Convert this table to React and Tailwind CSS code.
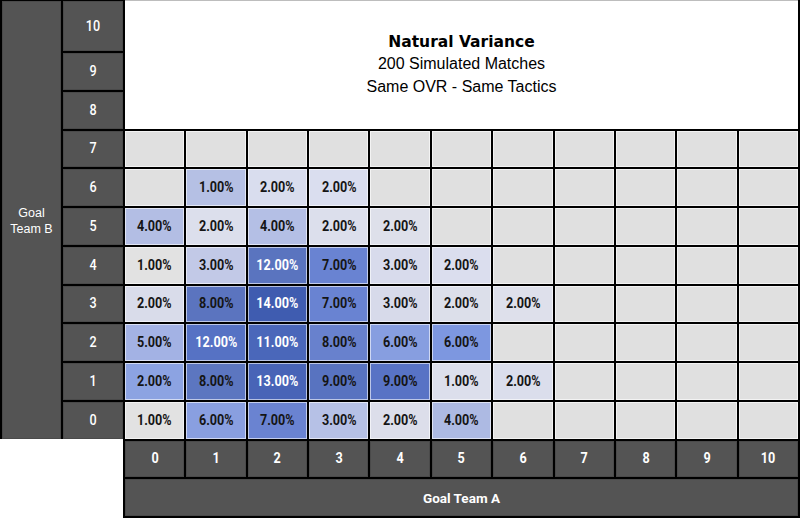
import React from "react";

const CELLS = {
  "6-1": ["1.00%", "#b5c0e4"],
  "6-2": ["2.00%", "#d9ddee"],
  "6-3": ["2.00%", "#dadeef"],
  "5-0": ["4.00%", "#b3bee4"],
  "5-1": ["2.00%", "#dcdfec"],
  "5-2": ["4.00%", "#b4bfe5"],
  "5-3": ["2.00%", "#dcdfec"],
  "5-4": ["2.00%", "#dee0ea"],
  "4-0": ["1.00%", "#e2e2e2"],
  "4-1": ["3.00%", "#c2c9e7"],
  "4-2": ["12.00%", "#5a74bf", true],
  "4-3": ["7.00%", "#6983d2"],
  "4-4": ["3.00%", "#d8dbec"],
  "4-5": ["2.00%", "#dbdeee"],
  "3-0": ["2.00%", "#d9dcea"],
  "3-1": ["8.00%", "#5b74bf"],
  "3-2": ["14.00%", "#3f5cb0", true],
  "3-3": ["7.00%", "#6983d2"],
  "3-4": ["3.00%", "#d7daea"],
  "3-5": ["2.00%", "#dcdfea"],
  "3-6": ["2.00%", "#dee0eb"],
  "2-0": ["5.00%", "#a3b2e4"],
  "2-1": ["12.00%", "#5672c4", true],
  "2-2": ["11.00%", "#4a67ba", true],
  "2-3": ["8.00%", "#6881cd"],
  "2-4": ["6.00%", "#879ee0"],
  "2-5": ["6.00%", "#7d97e0"],
  "1-0": ["2.00%", "#8ca3e2"],
  "1-1": ["8.00%", "#5c76c0"],
  "1-2": ["13.00%", "#4864b7", true],
  "1-3": ["9.00%", "#5873c0"],
  "1-4": ["9.00%", "#5873c5"],
  "1-5": ["1.00%", "#dcdfec"],
  "1-6": ["2.00%", "#dbdeec"],
  "0-0": ["1.00%", "#e2e2e2"],
  "0-1": ["6.00%", "#899fe0"],
  "0-2": ["7.00%", "#6a83d1"],
  "0-3": ["3.00%", "#b6c1e6"],
  "0-4": ["2.00%", "#dcdeea"],
  "0-5": ["4.00%", "#adbae3"],
};

const COND = { fontFamily: "Roboto, sans-serif" };

const cols = [0, 1, 2, 3, 4, 5, 6, 7, 8, 9, 10];
const dataRows = [7, 6, 5, 4, 3, 2, 1, 0];

function Label({ children, bold = false }) {
  return (
    <div
      className={`bg-[#545454] text-white flex items-center justify-center border border-[#4a4a4a] ${
        bold ? "font-bold" : "font-medium"
      }`}
      style={COND}
    >
      <span className="inline-block text-[14px] scale-x-[0.9]">{children}</span>
    </div>
  );
}

export default function App() {
  return (
    <div
      className="w-[800px] h-[518px] bg-black grid gap-[2px] pt-[1px] pb-[2px] px-[2px] grid-cols-[59px_60px_repeat(11,minmax(0,1fr))] grid-rows-[50px_repeat(12,minmax(0,1fr))]"
      style={{ fontFamily: '"Liberation Sans", Arial, sans-serif' }}
    >
      <div className="row-span-11 bg-[#545454] border border-[#4a4a4a] flex items-center justify-center text-white text-[12.5px] leading-[16px] text-center pt-[3px]">
        Goal
        <br />
        Team B
      </div>
      <Label>10</Label>
      <div className="col-span-11 row-span-3 bg-white -mt-[1px] border-t border-[#bdbdbd] flex flex-col items-center justify-center text-black">
        <div
          className="text-[15.5px] font-bold leading-[20px]"
          style={{ fontFamily: '"DejaVu Sans", sans-serif' }}
        >
          Natural Variance
        </div>
        <div className="text-[16px] leading-[23px]">200 Simulated Matches</div>
        <div className="text-[16px] leading-[23px]">Same OVR - Same Tactics</div>
      </div>
      <Label>9</Label>
      <Label>8</Label>
      {dataRows.map((r) => (
        <React.Fragment key={r}>
          <Label>{r}</Label>
          {cols.map((c) => {
            const cell = CELLS[`${r}-${c}`];
            const bg = cell ? cell[1] : "#e0e0e0";
            return (
              <div
                key={c}
                className={`flex items-center justify-center font-bold border border-white/60 ${
                  cell && cell[2] ? "text-white" : "text-[#151515]"
                }`}
                style={{ ...COND, backgroundColor: bg }}
              >
                <span className="inline-block text-[14px] scale-x-[0.9]">
                  {cell ? cell[0] : ""}
                </span>
              </div>
            );
          })}
        </React.Fragment>
      ))}
      <div className="col-span-2 row-span-2 bg-white -ml-[2px] -mt-[2px] -mb-[2px]" />
      {cols.map((c) => (
        <Label key={c} bold>
          {c}
        </Label>
      ))}
      <div
        className="col-span-11 bg-[#545454] border border-[#4a4a4a] flex items-center justify-center text-white text-[13.5px] font-bold"
        style={COND}
      >
        Goal Team A
      </div>
    </div>
  );
}
